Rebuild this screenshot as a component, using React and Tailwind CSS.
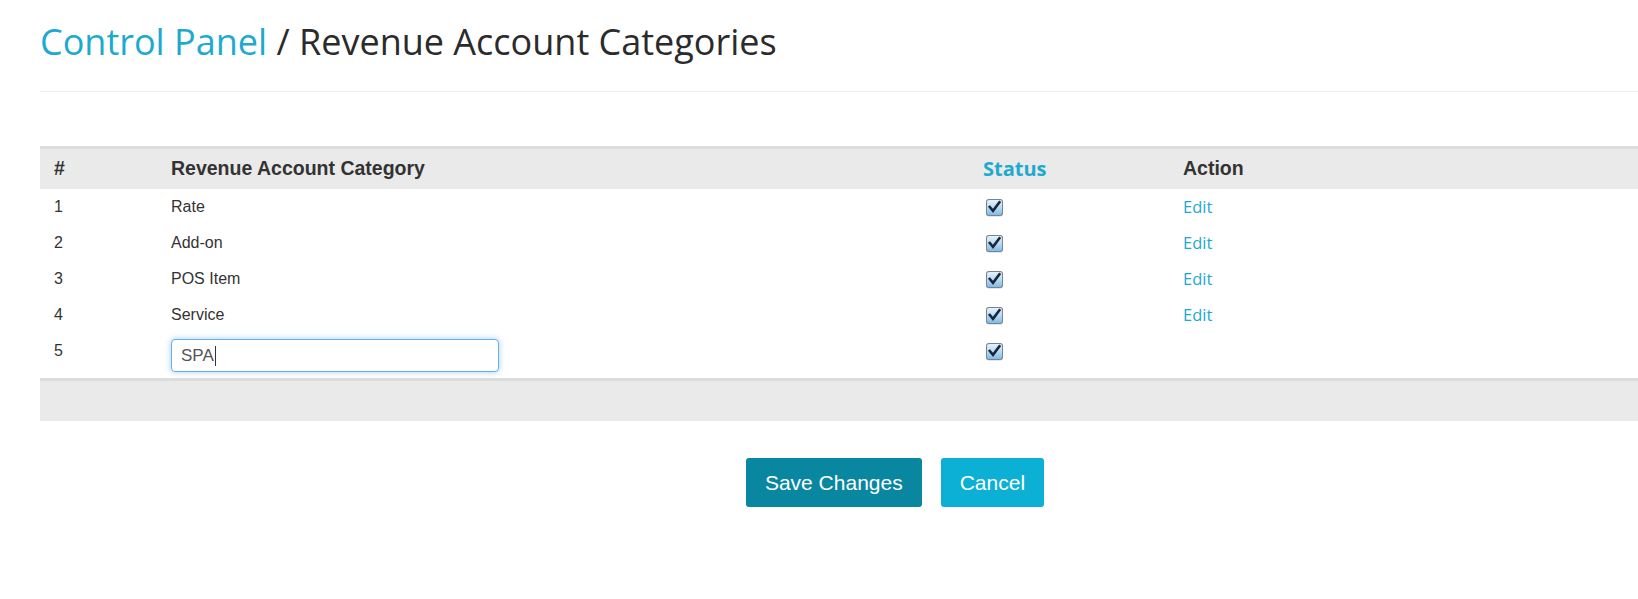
import React from 'react';

const rows = [
    { id: 1, name: 'Rate' },
    { id: 2, name: 'Add-on' },
    { id: 3, name: 'POS Item' },
    { id: 4, name: 'Service' },
];

const cols = 'grid grid-cols-[131px_812px_200px_1fr]';

const CheckMark = () => (
    <svg width="19" height="19" viewBox="0 0 19 19" className="ml-[2px] mt-[1px]">
        <defs>
            <linearGradient id="cbFill" x1="0" y1="0" x2="0" y2="1">
                <stop offset="0" stopColor="#e4f3fd" />
                <stop offset="0.5" stopColor="#b6dcf7" />
                <stop offset="1" stopColor="#7fbbe9" />
            </linearGradient>
        </defs>
        <rect x="1" y="1.5" width="17" height="17" rx="3" fill="#c9ccd0" />
        <rect x="1" y="1" width="17" height="17" rx="3" fill="#7d838b" />
        <rect x="2" y="2" width="15" height="15" rx="2" fill="url(#cbFill)" />
        <path d="M4.8 9 L8 12.8 L14.4 4.2" fill="none" stroke="#1d2738" strokeWidth="2.6" strokeLinecap="square" />
    </svg>
);

export default function App() {
    return (
        <div className="w-[1638px] h-[599px] overflow-hidden bg-white font-['Liberation_Sans',Arial,sans-serif]">
            <div className="w-[1750px] pl-10">
                <h1 className="pt-6 text-[36px] leading-none font-['Open_Sans',sans-serif] font-normal text-[#2b2b2b]">
                    <span className="text-[#1ea9cf]">Control Panel</span> / Revenue Account Categories
                </h1>
                <div className="mt-[31px] border-t border-[#eeeeee]" />

                <div className="mt-[54px] border-t-[3px] border-[#dddddd]">
                    <div className={`${cols} h-10 items-center bg-[#eaeaea] text-[19.5px] font-bold text-[#333]`}>
                        <div className="pl-[14px]">#</div>
                        <div>Revenue Account Category</div>
                        <div className="font-['Open_Sans',sans-serif] text-[20px] text-[#1ea9cf]">Status</div>
                        <div>Action</div>
                    </div>

                    {rows.map((row) => (
                        <div key={row.id} className={`${cols} h-9 text-[16px] leading-5 text-[#333]`}>
                            <div className="pl-[14px] pt-2">{row.id}</div>
                            <div className="pt-2">{row.name}</div>
                            <div className="pt-2">
                                <CheckMark />
                            </div>
                            <div className="pt-2 font-['Open_Sans',sans-serif] text-[16.5px] text-[#1ea9cf]">Edit</div>
                        </div>
                    ))}

                    <div className={`${cols} h-[45px] text-[16px] leading-5 text-[#333]`}>
                        <div className="pl-[14px] pt-2">5</div>
                        <div className="pt-[6px]">
                            <div className="flex h-[33px] w-[328px] items-center rounded-[4px] border border-[#66afe9] bg-white pl-[9px] text-[17px] text-[#555] shadow-[0_0_6px_rgba(102,175,233,0.6)]">
                                SPA
                                <span className="ml-[1px] h-[20px] w-px bg-[#333]" />
                            </div>
                        </div>
                        <div className="pt-2">
                            <CheckMark />
                        </div>
                        <div />
                    </div>

                    <div className="h-[43px] border-t-[3px] border-[#dcdcdc] bg-[#eaeaea]" />
                </div>

                <div className="mt-[37px] flex justify-center gap-[19px] text-[21px] text-white">
                    <button className="h-[49px] rounded-[3px] bg-[#0a87a0] px-[19px]">Save Changes</button>
                    <button className="h-[49px] rounded-[3px] bg-[#0cb0d4] px-[19px]">Cancel</button>
                </div>
            </div>
        </div>
    );
}
